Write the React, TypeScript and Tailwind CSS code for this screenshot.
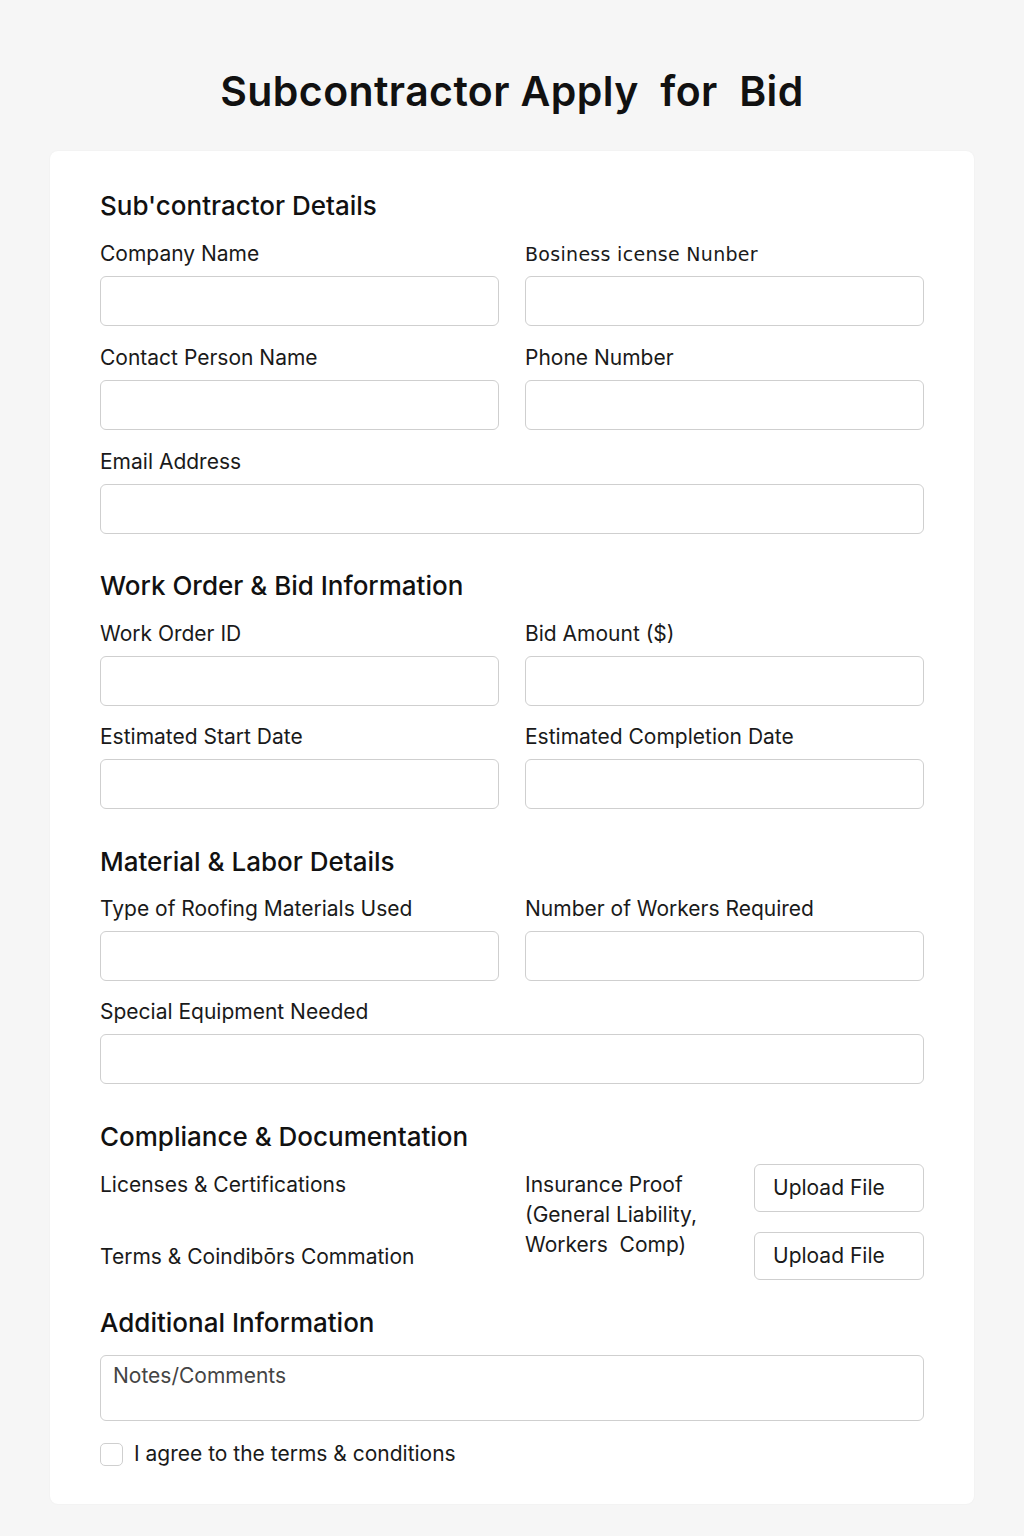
import React from 'react';

const font = { fontFamily: 'Inter, "Liberation Sans", Arial, sans-serif' };

function Field({ label, full, odd }: { label: string; full?: boolean; odd?: boolean }) {
  return (
    <div className={full ? 'col-span-2 flex flex-col' : 'flex flex-col'}>
      <label
        className="text-[21px] leading-[28px] text-[#1a1a1a]"
        style={odd ? { fontFamily: '"DejaVu Sans", sans-serif', fontSize: '19px', letterSpacing: '0.3px' } : undefined}
      >
        {label}
      </label>
      <input
        type="text"
        className="mt-2 h-[50px] w-full rounded-md border border-[#cfcfcf] bg-white px-3 outline-none"
      />
    </div>
  );
}

function SectionTitle({ children }: { children: React.ReactNode }) {
  return <h2 className="text-[26px] font-medium leading-[32px] text-[#111]">{children}</h2>;
}

export default function App() {
  return (
    <div className="min-h-[1536px] w-full bg-[#f6f6f6] px-[50px] pt-[64px]" style={font}>
      <h1 className="text-center text-[41px] font-semibold leading-[54px] tracking-[0.4px] text-[#111]">
        Subcontractor Apply&nbsp; for&nbsp; Bid
      </h1>

      <div className="mt-[33px] rounded-lg bg-white px-[50px] pb-[36px] pt-[39px] shadow-[0_0_2px_rgba(0,0,0,0.05)]">
        {/* Subcontractor details */}
        <SectionTitle>Sub'contractor Details</SectionTitle>
        <div className="mt-[18px] grid grid-cols-2 gap-x-[26px] gap-y-[18px]">
          <Field label="Company Name" />
          <Field label="Bosiness icense Nunber" odd />
          <Field label="Contact Person Name" />
          <Field label="Phone Number" />
          <Field label="Email Address" full />
        </div>

        {/* Work order */}
        <div className="mt-[36px]">
          <SectionTitle>Work Order &amp; Bid Information</SectionTitle>
        </div>
        <div className="mt-[18px] grid grid-cols-2 gap-x-[26px] gap-y-[17px]">
          <Field label="Work Order ID" />
          <Field label="Bid Amount ($)" />
          <Field label="Estimated Start Date" />
          <Field label="Estimated Completion Date" />
        </div>

        {/* Material */}
        <div className="mt-[37px]">
          <SectionTitle>Material &amp; Labor Details</SectionTitle>
        </div>
        <div className="mt-[17px] grid grid-cols-2 gap-x-[26px] gap-y-[17px]">
          <Field label="Type of Roofing Materials Used" />
          <Field label="Number of Workers Required" />
          <Field label="Special Equipment Needed" full />
        </div>

        {/* Compliance */}
        <div className="mt-[37px]">
          <SectionTitle>Compliance &amp; Documentation</SectionTitle>
        </div>
        <div className="mt-[11px] grid grid-cols-2 gap-x-[26px]">
          <div className="flex flex-col text-[21px] leading-[28px] text-[#1a1a1a]">
            <span className="mt-[7px]">Licenses &amp; Certifications</span>
            <span className="mt-[44px]">Terms &amp; Coindibōrs Commation</span>
          </div>
          <div className="flex justify-between">
            <p className="mt-[6px] text-[21px] leading-[30px] text-[#1a1a1a]">
              Insurance Proof
              <br />
              (General Liability,
              <br />
              Workers&nbsp; Comp)
            </p>
            <div className="flex w-[170px] flex-col gap-[20px]">
              <button className="h-[48px] rounded-md border border-[#cfcfcf] bg-white px-[18px] text-left text-[21px] text-[#1a1a1a]">
                Upload File
              </button>
              <button className="h-[48px] rounded-md border border-[#cfcfcf] bg-white px-[18px] text-left text-[21px] text-[#1a1a1a]">
                Upload File
              </button>
            </div>
          </div>
        </div>

        {/* Additional */}
        <div className="mt-[27px]">
          <SectionTitle>Additional Information</SectionTitle>
        </div>
        <textarea
          placeholder="Notes/Comments"
          className="mt-[16px] block h-[66px] w-full resize-none rounded-md border border-[#cfcfcf] px-3 py-[6px] text-[21px] leading-[28px] outline-none placeholder:text-[#444]"
        />
        <label className="mt-[19px] flex items-center gap-[11px] text-[21px] leading-[28px] text-[#1a1a1a]">
          <span className="h-[23px] w-[23px] rounded-[5px] border border-[#cfcfcf] bg-white" />
          I agree to the terms &amp; conditions
        </label>
      </div>
    </div>
  );
}
